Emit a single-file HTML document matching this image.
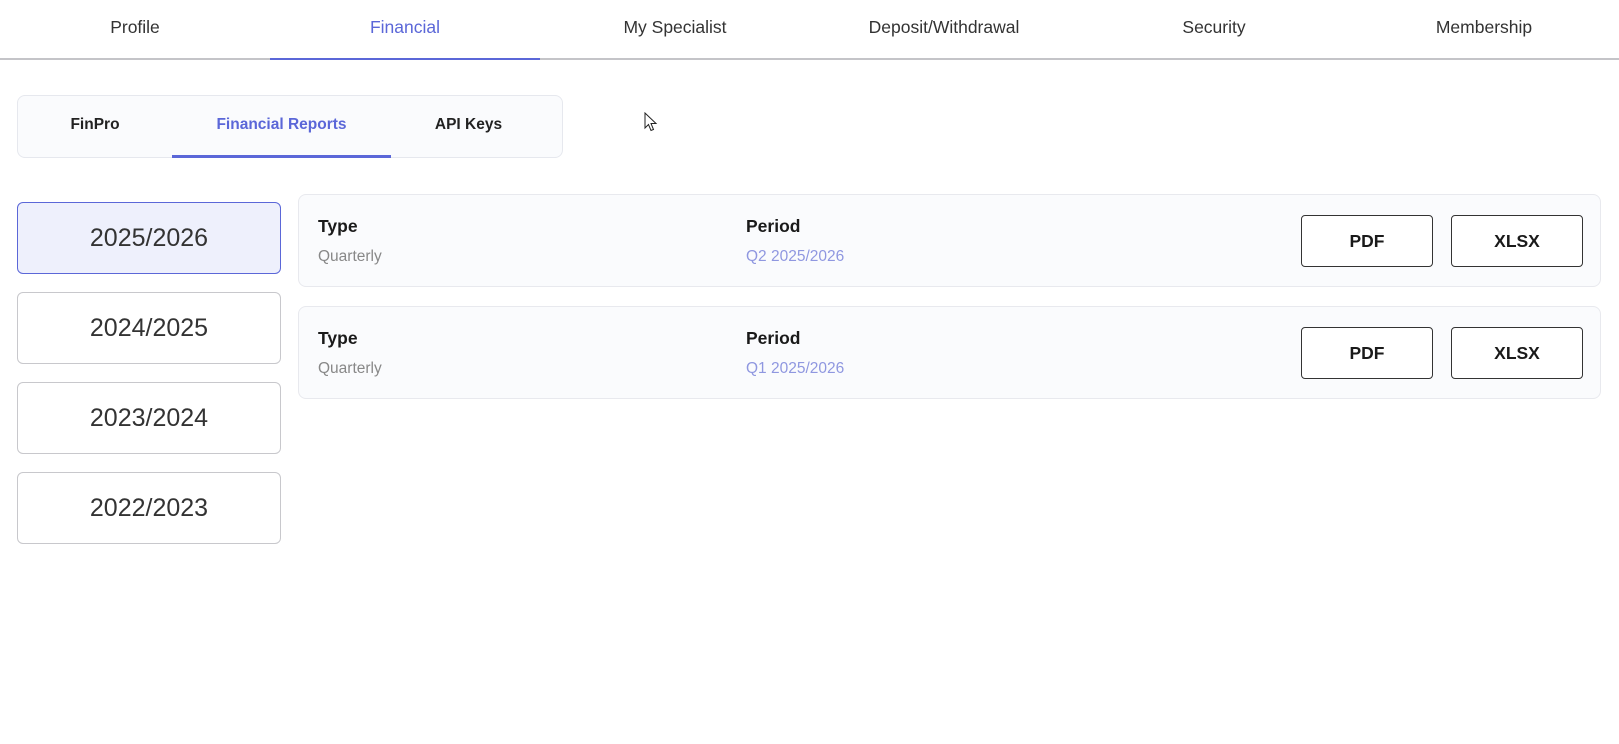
<!DOCTYPE html>
<html><head><style>
*{box-sizing:border-box;margin:0;padding:0}
body{width:1619px;height:744px;background:#fff;font-family:"Liberation Sans",Arial,sans-serif;position:relative;overflow:hidden;color:#222}
.nav{position:absolute;left:0;top:0;width:1619px;height:60px;border-bottom:2px solid #c4c4c8}
.nav div{position:absolute;top:0;width:270px;height:58px;text-align:center;line-height:54px;font-size:17.5px;color:#333}
.nav .act{color:#5b67d8;border-bottom:2px solid #5b67d8;height:60px}
.sub{position:absolute;left:17px;top:95px;width:546px;height:63px;border:1px solid #e6e8ee;border-radius:8px;background:#fafbfd}
.sub div{position:absolute;top:0;height:62px;line-height:58px;font-size:15.5px;font-weight:bold;text-align:center;color:#222}
.sub .act{color:#5b67d8;border-bottom:3px solid #5b67d8}
.yr{position:absolute;left:17px;width:264px;height:72px;border:1px solid #c8c8cc;border-radius:6px;text-align:center;line-height:70px;font-size:25px;color:#333;background:#fff}
.yr.act{background:#eef0fc;border-color:#5b67d8}
.card{position:absolute;left:298px;width:1303px;height:93px;border:1px solid #e8e9ee;border-radius:8px;background:#fafbfd}
.lbl{position:absolute;font-size:17.5px;font-weight:bold;color:#1a1a1a}
.val{position:absolute;font-size:15.5px;color:#888}
.val.p{color:#8f97e0}
.btn{position:absolute;top:20px;width:132px;height:52px;border:1px solid #333;border-radius:4px;background:#fff;text-align:center;line-height:50px;font-size:17.5px;font-weight:bold;color:#1a1a1a}
</style></head><body>
<div class="nav">
<div style="left:0">Profile</div>
<div class="act" style="left:270px">Financial</div>
<div style="left:540px">My Specialist</div>
<div style="left:809px">Deposit/Withdrawal</div>
<div style="left:1079px">Security</div>
<div style="left:1349px">Membership</div>
</div>
<div class="sub">
<div style="left:0;width:154px">FinPro</div>
<div class="act" style="left:154px;width:219px">Financial Reports</div>
<div style="left:373px;width:155px">API Keys</div>
</div>
<svg style="position:absolute;left:644px;top:112px" width="14" height="20" viewBox="0 0 14 20"><path d="M1 1 L1 16 L4.5 12.5 L7 18.5 L9.5 17.5 L7 11.5 L12 11.5 Z" fill="#fff" stroke="#222" stroke-width="1"/></svg>
<div class="yr act" style="top:202px">2025/2026</div>
<div class="yr" style="top:292px">2024/2025</div>
<div class="yr" style="top:382px">2023/2024</div>
<div class="yr" style="top:472px">2022/2023</div>
<div class="card" style="top:194px">
<div class="lbl" style="left:19px;top:21px">Type</div>
<div class="val" style="left:19px;top:53px">Quarterly</div>
<div class="lbl" style="left:447px;top:21px">Period</div>
<div class="val p" style="left:447px;top:53px">Q2 2025/2026</div>
<div class="btn" style="left:1002px">PDF</div>
<div class="btn" style="left:1152px">XLSX</div>
</div>
<div class="card" style="top:306px">
<div class="lbl" style="left:19px;top:21px">Type</div>
<div class="val" style="left:19px;top:53px">Quarterly</div>
<div class="lbl" style="left:447px;top:21px">Period</div>
<div class="val p" style="left:447px;top:53px">Q1 2025/2026</div>
<div class="btn" style="left:1002px">PDF</div>
<div class="btn" style="left:1152px">XLSX</div>
</div>
</body></html>
